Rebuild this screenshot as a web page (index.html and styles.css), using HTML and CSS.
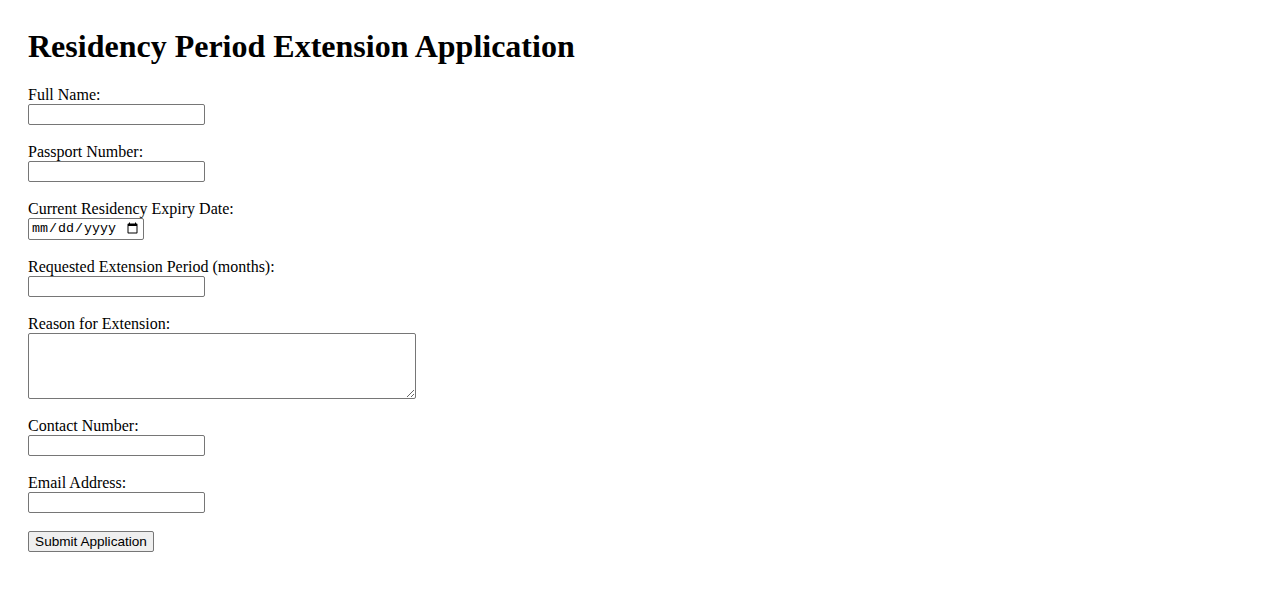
FILE: index.html
```html
<!DOCTYPE html>
<html>
<head>
<meta charset="utf-8">
<title>Residency Period Extension Application</title>
<link rel="stylesheet" href="styles.css">
</head>
<body class="page">
<h1 class="title">Residency Period Extension Application</h1>
<form class="form">
<label class="lbl" for="fullName">Full Name:</label><br>
<input class="txt" type="text" id="fullName"><br><br>
<label class="lbl" for="passport">Passport Number:</label><br>
<input class="txt" type="text" id="passport"><br><br>
<label class="lbl" for="expiry">Current Residency Expiry Date:</label><br>
<input class="date" type="date" id="expiry"><br><br>
<label class="lbl" for="period">Requested Extension Period (months):</label><br>
<input class="txt" type="number" id="period"><br><br>
<label class="lbl" for="reason">Reason for Extension:</label><br>
<textarea class="area" id="reason" rows="4" cols="50"></textarea><br><br>
<label class="lbl" for="contact">Contact Number:</label><br>
<input class="txt" type="tel" id="contact"><br><br>
<label class="lbl" for="email">Email Address:</label><br>
<input class="txt" type="email" id="email"><br><br>
<button class="btn" type="submit">Submit Application</button>
</form>
</body>
</html>
```
FILE: styles.css
```css
.page {
  margin: 0;
  padding: 28px;
  font-family: "Liberation Serif", "Times New Roman", serif;
  font-size: 16px;
  color: #000;
  background: #fff;
}
.title {
  font-size: 32px;
  font-weight: bold;
  margin: 0 0 21px;
}
.txt {
  box-sizing: border-box;
  width: 177px;
  height: 21px;
  font-family: "Liberation Sans", Arial, sans-serif;
  font-size: 13.33px;
  border: 1px solid #767676;
  border-radius: 2px;
  padding: 1px 2px;
  margin: 0;
  vertical-align: baseline;
}
.date {
  box-sizing: border-box;
  width: 116px;
  height: 22px;
  font-family: "Liberation Mono", monospace;
  font-size: 13.33px;
  border: 1px solid #767676;
  border-radius: 2px;
  padding: 1px 2px;
  margin: 0;
}
.area {
  box-sizing: border-box;
  width: 388px;
  height: 66px;
  border: 1px solid #767676;
  border-radius: 2px;
  margin: 0;
  vertical-align: bottom;
}
.btn {
  box-sizing: border-box;
  height: 21px;
  width: 126px;
  font-family: "Liberation Sans", Arial, sans-serif;
  font-size: 13.6px;
  white-space: nowrap;
  color: #000;
  background: #efefef;
  border: 1px solid #767676;
  border-radius: 2px;
  padding: 0 2px;
  margin: 0;
}
```
